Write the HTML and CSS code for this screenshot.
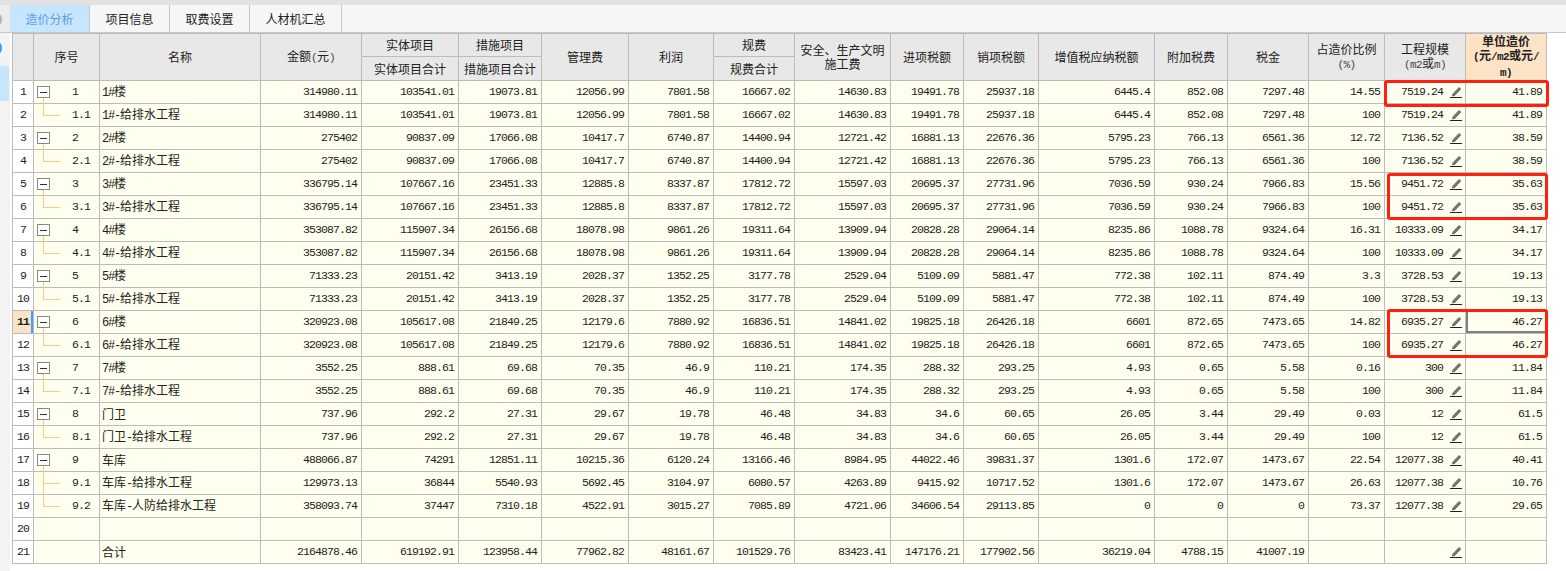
FILE: index.html
```html
<!DOCTYPE html>
<html>
	<head>
		<meta charset="utf-8">
		<title>造价分析</title>
		<link rel="stylesheet" href="styles.css">
	</head>
	<body>
		<svg class="defs" width="0" height="0">
			<symbol id="pencil" viewBox="0 0 12 12">
				<path d="M3 7.8 9 1.4l1.8 1.6-6 6.4-2.4.6z" fill="#777" stroke="#444" stroke-width=".6"/>
				<path d="M0 11.5h12" stroke="#222" stroke-width="1"/>
			</symbol>
		</svg>
		<div id="topbar"></div>
		<div id="tabs">
			<div class="tabs-left"><div class="knob"></div></div>
			<div class="tab active">造价分析</div>
			<div class="tab">项目信息</div>
			<div class="tab">取费设置</div>
			<div class="tab wide">人材机汇总</div>
		</div>
		<div id="main">
			<div id="side">
				<div class="dot"></div>
				<div class="side-sel"></div>
			</div>
			<div id="grid">
				<table>
					<colgroup>
						<col class="c21"><col class="c66"><col class="c161"><col class="c101"><col class="c97"><col class="c83"><col class="c87"><col class="c85"><col class="c81"><col class="c96"><col class="c73"><col class="c75"><col class="c116"><col class="c73"><col class="c81"><col class="c76"><col class="c81"><col class="c81">
					</colgroup>
					<thead>
						<tr class="top">
							<th rowspan="2"></th><th rowspan="2">序号</th><th rowspan="2">名称</th><th rowspan="2">金额<span class="sub">(</span>元<span class="sub">)</span></th>
							<th>实体项目</th><th>措施项目</th>
							<th rowspan="2">管理费</th><th rowspan="2">利润</th><th>规费</th>
							<th rowspan="2">安全、生产文明<br>施工费</th><th rowspan="2">进项税额</th><th rowspan="2">销项税额</th><th rowspan="2">增值税应纳税额</th><th rowspan="2">附加税费</th><th rowspan="2">税金</th>
							<th rowspan="2">占造价比例<br><span class="sub">(%)</span></th>
							<th rowspan="2">工程规模<br><span class="sub">(m2</span>或<span class="sub">m)</span></th>
							<th rowspan="2" class="hot">单位造价<br><span class="sub">(</span>元<span class="sub">/m2</span>或元<span class="sub">/</span><br><span class="sub">m)</span></th>
						</tr>
						<tr class="low">
							<th>实体项目合计</th><th>措施项目合计</th><th>规费合计</th>
						</tr>
					</thead>
					<tbody>
						<tr><td class="rn">1</td><td class="seq"><i class="tog"></i>1</td><td class="nm"><span class="a">1#</span>楼</td><td>314980.11</td><td>103541.01</td><td>19073.81</td><td>12056.99</td><td>7801.58</td><td>16667.02</td><td>14630.83</td><td>19491.78</td><td>25937.18</td><td>6445.4</td><td>852.08</td><td>7297.48</td><td>14.55</td><td class="sz">7519.24<svg class="pen"><use href="#pencil"/></svg></td><td>41.89</td></tr>
						<tr><td class="rn">2</td><td class="seq"><i class="branch"></i>1.1</td><td class="nm"><span class="a">1#-</span>给排水工程</td><td>314980.11</td><td>103541.01</td><td>19073.81</td><td>12056.99</td><td>7801.58</td><td>16667.02</td><td>14630.83</td><td>19491.78</td><td>25937.18</td><td>6445.4</td><td>852.08</td><td>7297.48</td><td>100</td><td class="sz">7519.24<svg class="pen"><use href="#pencil"/></svg></td><td>41.89</td></tr>
						<tr><td class="rn">3</td><td class="seq"><i class="tog"></i>2</td><td class="nm"><span class="a">2#</span>楼</td><td>275402</td><td>90837.09</td><td>17066.08</td><td>10417.7</td><td>6740.87</td><td>14400.94</td><td>12721.42</td><td>16881.13</td><td>22676.36</td><td>5795.23</td><td>766.13</td><td>6561.36</td><td>12.72</td><td class="sz">7136.52<svg class="pen"><use href="#pencil"/></svg></td><td>38.59</td></tr>
						<tr><td class="rn">4</td><td class="seq"><i class="branch"></i>2.1</td><td class="nm"><span class="a">2#-</span>给排水工程</td><td>275402</td><td>90837.09</td><td>17066.08</td><td>10417.7</td><td>6740.87</td><td>14400.94</td><td>12721.42</td><td>16881.13</td><td>22676.36</td><td>5795.23</td><td>766.13</td><td>6561.36</td><td>100</td><td class="sz">7136.52<svg class="pen"><use href="#pencil"/></svg></td><td>38.59</td></tr>
						<tr><td class="rn">5</td><td class="seq"><i class="tog"></i>3</td><td class="nm"><span class="a">3#</span>楼</td><td>336795.14</td><td>107667.16</td><td>23451.33</td><td>12885.8</td><td>8337.87</td><td>17812.72</td><td>15597.03</td><td>20695.37</td><td>27731.96</td><td>7036.59</td><td>930.24</td><td>7966.83</td><td>15.56</td><td class="sz">9451.72<svg class="pen"><use href="#pencil"/></svg></td><td>35.63</td></tr>
						<tr><td class="rn">6</td><td class="seq"><i class="branch"></i>3.1</td><td class="nm"><span class="a">3#-</span>给排水工程</td><td>336795.14</td><td>107667.16</td><td>23451.33</td><td>12885.8</td><td>8337.87</td><td>17812.72</td><td>15597.03</td><td>20695.37</td><td>27731.96</td><td>7036.59</td><td>930.24</td><td>7966.83</td><td>100</td><td class="sz">9451.72<svg class="pen"><use href="#pencil"/></svg></td><td>35.63</td></tr>
						<tr><td class="rn">7</td><td class="seq"><i class="tog"></i>4</td><td class="nm"><span class="a">4#</span>楼</td><td>353087.82</td><td>115907.34</td><td>26156.68</td><td>18078.98</td><td>9861.26</td><td>19311.64</td><td>13909.94</td><td>20828.28</td><td>29064.14</td><td>8235.86</td><td>1088.78</td><td>9324.64</td><td>16.31</td><td class="sz">10333.09<svg class="pen"><use href="#pencil"/></svg></td><td>34.17</td></tr>
						<tr><td class="rn">8</td><td class="seq"><i class="branch"></i>4.1</td><td class="nm"><span class="a">4#-</span>给排水工程</td><td>353087.82</td><td>115907.34</td><td>26156.68</td><td>18078.98</td><td>9861.26</td><td>19311.64</td><td>13909.94</td><td>20828.28</td><td>29064.14</td><td>8235.86</td><td>1088.78</td><td>9324.64</td><td>100</td><td class="sz">10333.09<svg class="pen"><use href="#pencil"/></svg></td><td>34.17</td></tr>
						<tr><td class="rn">9</td><td class="seq"><i class="tog"></i>5</td><td class="nm"><span class="a">5#</span>楼</td><td>71333.23</td><td>20151.42</td><td>3413.19</td><td>2028.37</td><td>1352.25</td><td>3177.78</td><td>2529.04</td><td>5109.09</td><td>5881.47</td><td>772.38</td><td>102.11</td><td>874.49</td><td>3.3</td><td class="sz">3728.53<svg class="pen"><use href="#pencil"/></svg></td><td>19.13</td></tr>
						<tr><td class="rn">10</td><td class="seq"><i class="branch"></i>5.1</td><td class="nm"><span class="a">5#-</span>给排水工程</td><td>71333.23</td><td>20151.42</td><td>3413.19</td><td>2028.37</td><td>1352.25</td><td>3177.78</td><td>2529.04</td><td>5109.09</td><td>5881.47</td><td>772.38</td><td>102.11</td><td>874.49</td><td>100</td><td class="sz">3728.53<svg class="pen"><use href="#pencil"/></svg></td><td>19.13</td></tr>
						<tr><td class="rn cur">11</td><td class="seq"><i class="tog"></i>6</td><td class="nm"><span class="a">6#</span>楼</td><td>320923.08</td><td>105617.08</td><td>21849.25</td><td>12179.6</td><td>7880.92</td><td>16836.51</td><td>14841.02</td><td>19825.18</td><td>26426.18</td><td>6601</td><td>872.65</td><td>7473.65</td><td>14.82</td><td class="sz">6935.27<svg class="pen"><use href="#pencil"/></svg></td><td class="sel">46.27</td></tr>
						<tr><td class="rn">12</td><td class="seq"><i class="branch"></i>6.1</td><td class="nm"><span class="a">6#-</span>给排水工程</td><td>320923.08</td><td>105617.08</td><td>21849.25</td><td>12179.6</td><td>7880.92</td><td>16836.51</td><td>14841.02</td><td>19825.18</td><td>26426.18</td><td>6601</td><td>872.65</td><td>7473.65</td><td>100</td><td class="sz">6935.27<svg class="pen"><use href="#pencil"/></svg></td><td>46.27</td></tr>
						<tr><td class="rn">13</td><td class="seq"><i class="tog"></i>7</td><td class="nm"><span class="a">7#</span>楼</td><td>3552.25</td><td>888.61</td><td>69.68</td><td>70.35</td><td>46.9</td><td>110.21</td><td>174.35</td><td>288.32</td><td>293.25</td><td>4.93</td><td>0.65</td><td>5.58</td><td>0.16</td><td class="sz">300<svg class="pen"><use href="#pencil"/></svg></td><td>11.84</td></tr>
						<tr><td class="rn">14</td><td class="seq"><i class="branch"></i>7.1</td><td class="nm"><span class="a">7#-</span>给排水工程</td><td>3552.25</td><td>888.61</td><td>69.68</td><td>70.35</td><td>46.9</td><td>110.21</td><td>174.35</td><td>288.32</td><td>293.25</td><td>4.93</td><td>0.65</td><td>5.58</td><td>100</td><td class="sz">300<svg class="pen"><use href="#pencil"/></svg></td><td>11.84</td></tr>
						<tr><td class="rn">15</td><td class="seq"><i class="tog"></i>8</td><td class="nm">门卫</td><td>737.96</td><td>292.2</td><td>27.31</td><td>29.67</td><td>19.78</td><td>46.48</td><td>34.83</td><td>34.6</td><td>60.65</td><td>26.05</td><td>3.44</td><td>29.49</td><td>0.03</td><td class="sz">12<svg class="pen"><use href="#pencil"/></svg></td><td>61.5</td></tr>
						<tr><td class="rn">16</td><td class="seq"><i class="branch"></i>8.1</td><td class="nm">门卫<span class="a">-</span>给排水工程</td><td>737.96</td><td>292.2</td><td>27.31</td><td>29.67</td><td>19.78</td><td>46.48</td><td>34.83</td><td>34.6</td><td>60.65</td><td>26.05</td><td>3.44</td><td>29.49</td><td>100</td><td class="sz">12<svg class="pen"><use href="#pencil"/></svg></td><td>61.5</td></tr>
						<tr><td class="rn">17</td><td class="seq"><i class="tog"></i>9</td><td class="nm">车库</td><td>488066.87</td><td>74291</td><td>12851.11</td><td>10215.36</td><td>6120.24</td><td>13166.46</td><td>8984.95</td><td>44022.46</td><td>39831.37</td><td>1301.6</td><td>172.07</td><td>1473.67</td><td>22.54</td><td class="sz">12077.38<svg class="pen"><use href="#pencil"/></svg></td><td>40.41</td></tr>
						<tr><td class="rn">18</td><td class="seq"><i class="branch"></i>9.1</td><td class="nm">车库<span class="a">-</span>给排水工程</td><td>129973.13</td><td>36844</td><td>5540.93</td><td>5692.45</td><td>3104.97</td><td>6080.57</td><td>4263.89</td><td>9415.92</td><td>10717.52</td><td>1301.6</td><td>172.07</td><td>1473.67</td><td>26.63</td><td class="sz">12077.38<svg class="pen"><use href="#pencil"/></svg></td><td>10.76</td></tr>
						<tr><td class="rn">19</td><td class="seq"><i class="branch long"></i>9.2</td><td class="nm">车库<span class="a">-</span>人防给排水工程</td><td>358093.74</td><td>37447</td><td>7310.18</td><td>4522.91</td><td>3015.27</td><td>7085.89</td><td>4721.06</td><td>34606.54</td><td>29113.85</td><td>0</td><td>0</td><td>0</td><td>73.37</td><td class="sz">12077.38<svg class="pen"><use href="#pencil"/></svg></td><td>29.65</td></tr>
						<tr><td class="rn">20</td><td class="seq"></td><td class="nm"></td><td></td><td></td><td></td><td></td><td></td><td></td><td></td><td></td><td></td><td></td><td></td><td></td><td></td><td class="sz"></td><td></td></tr>
						<tr><td class="rn">21</td><td class="seq"></td><td class="nm">合计</td><td>2164878.46</td><td>619192.91</td><td>123958.44</td><td>77962.82</td><td>48161.67</td><td>101529.76</td><td>83423.41</td><td>147176.21</td><td>177902.56</td><td>36219.04</td><td>4788.15</td><td>41007.19</td><td></td><td class="sz"><svg class="pen"><use href="#pencil"/></svg></td><td></td></tr>
					</tbody>
				</table>
				<div class="mark m1"></div>
				<div class="mark m2"></div>
				<div class="mark m3"></div>
			</div>
		</div>
	</body>
</html>
```
FILE: styles.css
```css
body {
	margin: 0;
	background-color: #fff;
	height: 571px;
	overflow: hidden;
	color: #222;
	font-family: "Noto Sans CJK SC", sans-serif;
	font-size: 12px;
}
.defs {
	position: absolute;
}
#topbar {
	height: 5px;
	background-color: #e2e2e2;
}
#tabs {
	display: flex;
	height: 27px;
	background-color: #f6f6f6;
	border-bottom: 1px solid #c8c8c8;
}
.tabs-left {
	width: 10px;
	overflow: hidden;
	background-color: #ececec;
}
.knob {
	width: 7px;
	height: 11px;
	margin: 9px 0 0 -5px;
	border-radius: 50%;
	background-color: #b4b4b4;
}
.tab {
	width: 79px;
	border-right: 1px solid #c8c8c8;
	text-align: center;
	line-height: 27px;
}
.tab.wide {
	width: 91px;
}
.tab.active {
	background-color: #c6e6fe;
	color: #5b9bea;
}
#main {
	display: flex;
}
#side {
	width: 10px;
	height: 538px;
	background-color: #f3f3f3;
	overflow: hidden;
}
.dot {
	width: 8px;
	height: 12px;
	margin: 9px 0 0 -6px;
	border-radius: 50%;
	background-color: #3f9bff;
}
.side-sel {
	width: 9px;
	height: 35px;
	margin-top: 12px;
	background-color: #c6e6fe;
}
#grid {
	position: relative;
	margin-left: 2px;
}
table {
	border-collapse: collapse;
	table-layout: fixed;
	width: 1535px;
}
.c21 { width: 21px; }
.c66 { width: 66px; }
.c161 { width: 161px; }
.c101 { width: 101px; }
.c97 { width: 97px; }
.c83 { width: 83px; }
.c87 { width: 87px; }
.c85 { width: 85px; }
.c81 { width: 81px; }
.c96 { width: 96px; }
.c73 { width: 73px; }
.c75 { width: 75px; }
.c116 { width: 116px; }
.c76 { width: 76px; }
th, td {
	border: 1px solid #bcbcbc;
	padding: 0;
	overflow: hidden;
	white-space: nowrap;
}
th {
	background-color: #e8e8e8;
	font-weight: normal;
	line-height: 14px;
}
.top th {
	height: 22px;
}
.low th {
	height: 23px;
}
th .sub {
	font-family: "Liberation Mono", "Noto Sans CJK SC", monospace;
	font-size: 11px;
	letter-spacing: -0.6px;
	color: #444;
}
th.hot {
	background-color: #fde3c6;
	font-weight: bold;
}
th.hot .sub {
	color: #222;
}
td {
	height: 20px;
	background-color: #ffffef;
	text-align: right;
	padding: 0 4px 2px 0;
	font-family: "Liberation Mono", "Noto Sans CJK SC", monospace;
	font-size: 11.5px;
	letter-spacing: -0.9px;
}
td.rn {
	background-color: #fff;
	text-align: center;
	padding-right: 0;
}
td.rn.cur {
	background-color: #fde3c6;
	font-weight: bold;
	box-shadow: inset -2px 0 0 #3f9bff;
}
td.seq {
	position: relative;
	overflow: visible;
	text-align: left;
	padding-left: 38px;
	padding-right: 0;
}
td.nm {
	text-align: left;
	padding-left: 2px;
	padding-right: 0;
	font-family: "Noto Sans CJK SC", sans-serif;
	font-size: 12px;
	letter-spacing: 0;
}
.a {
	font-family: "Liberation Mono", monospace;
	font-size: 12px;
	letter-spacing: -1.2px;
}
td.sz {
	padding-right: 3px;
}
td.sel {
	box-shadow: inset 2px 0 0 #808080, inset 0 -2px 0 #808080, inset -1px 0 0 #808080, inset 0 1px 0 #a0a0a0;
}
.pen {
	width: 12px;
	height: 12px;
	margin-left: 7px;
	vertical-align: -3px;
}
.tog {
	position: absolute;
	left: 3px;
	top: 5px;
	width: 11px;
	height: 10px;
	border: 1px solid #888;
	background-color: #fff;
}
.tog::after {
	content: "";
	position: absolute;
	left: 2px;
	top: 5px;
	width: 7px;
	height: 1px;
	background-color: #333;
}
.branch {
	position: absolute;
	left: 9px;
	top: -6px;
	width: 16px;
	height: 17px;
	border-left: 1px solid #fdc77f;
	border-bottom: 1px solid #fdc77f;
}
.branch.long {
	top: -18px;
	height: 29px;
}
.mark {
	position: absolute;
	border: 3px solid #ff2010;
	border-radius: 3px;
	box-sizing: border-box;
	pointer-events: none;
}
.m1 { left: 1372px; top: 47px; width: 165px; height: 27px; }
.m2 { left: 1375px; top: 140px; width: 161px; height: 47px; }
.m3 { left: 1375px; top: 276px; width: 161px; height: 49px; }
```
